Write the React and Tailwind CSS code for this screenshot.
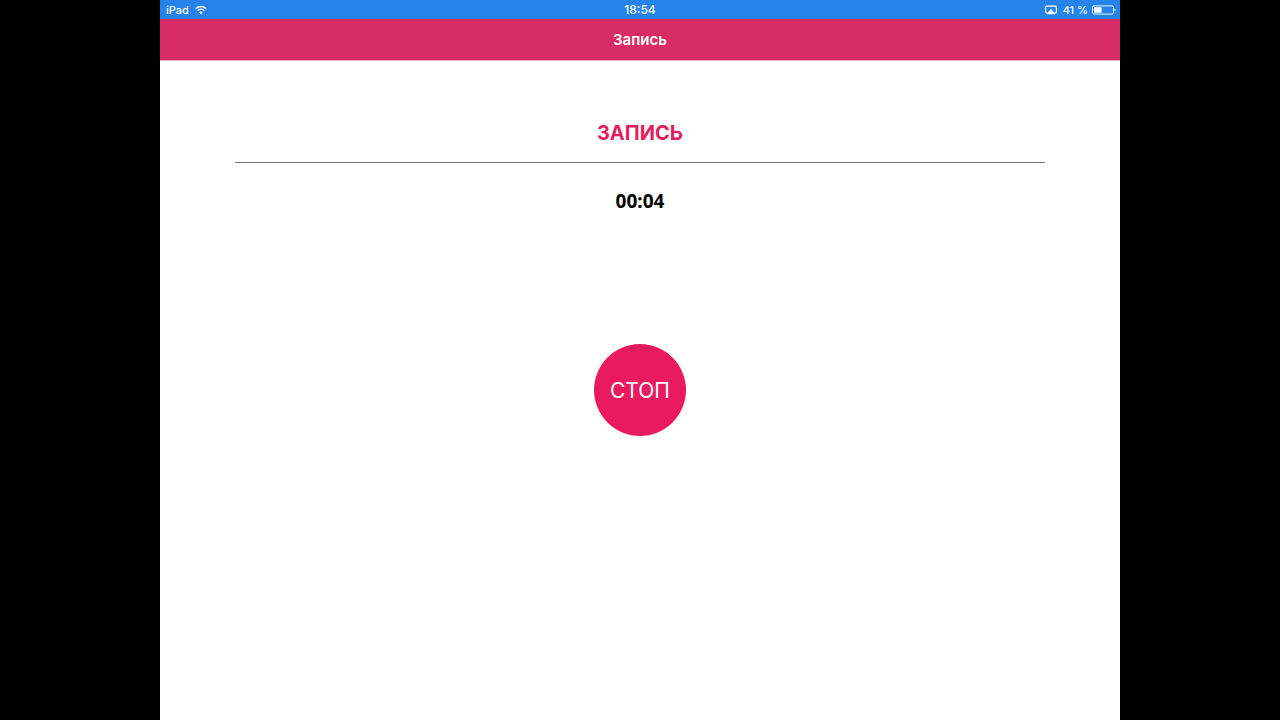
import React, { useState, useEffect } from 'react';

const WifiIcon = () => (
  <svg viewBox="0 0 12 10" className="h-[10px] w-3" fill="none" stroke="white" strokeWidth="1.5" aria-hidden="true">
    <path d="M0.8 3.7a7.4 7.4 0 0 1 10.4 0" />
    <path d="M2.7 5.7a4.7 4.7 0 0 1 6.6 0" />
    <path d="M6 9.2L4.2 7.4a2.6 2.6 0 0 1 3.6 0z" fill="white" stroke="none" />
  </svg>
);

const AirPlayIcon = () => (
  <svg viewBox="0 0 12 10" className="h-[10px] w-3" aria-hidden="true">
    <path
      d="M2.4 7.9H1.6a1 1 0 0 1-1-1V2.1a1 1 0 0 1 1-1h8.8a1 1 0 0 1 1 1v4.8a1 1 0 0 1-1 1h-0.8"
      fill="none"
      stroke="white"
      strokeWidth="1.2"
    />
    <path d="M6 3.8l4.4 5.4H1.6z" fill="white" />
  </svg>
);

const BatteryIcon = () => (
  <svg viewBox="0 0 24 10" className="h-[10px] w-6" aria-hidden="true">
    <rect x="0.5" y="0.9" width="21" height="8.2" rx="1.6" fill="none" stroke="white" strokeWidth="0.9" />
    <rect x="2" y="2.3" width="7.6" height="5.4" rx="0.4" fill="white" />
    <path d="M22.4 3.4c1.4 0.4 1.4 2.8 0 3.2z" fill="white" />
  </svg>
);

const StatusBar = () => (
  <div className="grid h-[19px] grid-cols-3 items-center bg-[#2583e9] px-1 pt-px text-[11px] font-medium text-white">
    <div className="flex items-center gap-1.5 pl-0.5">
      <span>iPad</span>
      <WifiIcon />
    </div>
    <span className="text-center text-xs">18:54</span>
    <div className="flex items-center justify-end gap-1">
      <AirPlayIcon />
      <span className="pl-0.5">41 %</span>
      <BatteryIcon />
    </div>
  </div>
);

const formatTime = (seconds) => {
  const mm = String(Math.floor(seconds / 60)).padStart(2, '0');
  const ss = String(seconds % 60).padStart(2, '0');
  return `${mm}:${ss}`;
};

const App = () => {
  const [recording, setRecording] = useState(true);

  useEffect(() => {
    document.title = 'Запись';
  }, []);

  return (
    <div className="flex min-h-screen justify-center bg-black font-['Inter',sans-serif]">
      <div className="flex w-3/4 flex-col bg-white">
        <StatusBar />
        <header className="flex h-[42px] items-center justify-center border-b border-[#e3b5c4] bg-[#d92b65] pt-px">
          <h1 className="text-[15px] font-semibold text-white">Запись</h1>
        </header>

        <main className="flex flex-col items-center px-[75px] pt-14">
          <h2 className="w-full border-b border-[#777777] pb-3 text-center text-xl leading-[33px] font-bold text-[#e2205f]">
            ЗАПИСЬ
          </h2>
          <time className="pt-6 font-['Noto_Sans',sans-serif] text-[19px] leading-[29px] font-bold text-black">
            {formatTime(4)}
          </time>
          <button
            type="button"
            aria-pressed={recording}
            onClick={() => setRecording(!recording)}
            className="mt-32 size-[92px] rounded-full bg-[#ea1a60] pt-0.5 text-[21px] text-white"
          >
            СТОП
          </button>
        </main>
      </div>
    </div>
  );
};

export default App;
